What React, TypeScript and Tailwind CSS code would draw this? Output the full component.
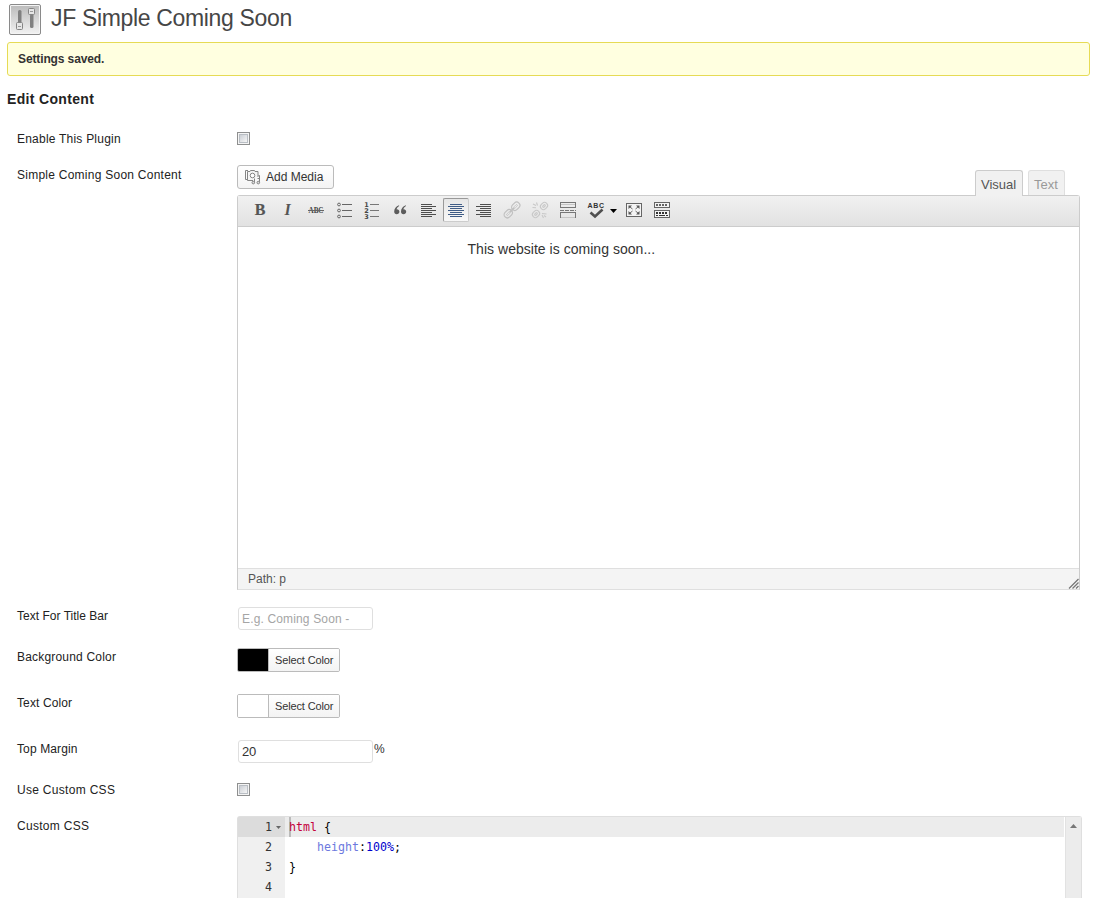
import React from "react";

const SANS = "font-['Liberation_Sans',Arial,sans-serif]";

function Row({
  label,
  height,
  tracking = "tracking-[0.25px]",
  children,
}: {
  label: string;
  height: string;
  tracking?: string;
  children: React.ReactNode;
}) {
  return (
    <div className={`flex ${height}`}>
      <div className={`w-[220px] shrink-0 pt-[10px] text-xs leading-4 text-[#222] ${tracking}`}>{label}</div>
      {children}
    </div>
  );
}

function Checkbox() {
  return (
    <div className="mt-[11px] size-[13px] border border-[#8e8f8f] bg-[#f4f4f4] p-px">
      <div className="size-full border border-[#b9bec4] bg-linear-to-br from-[#cbcfd5] to-[#f6f6f6]" />
    </div>
  );
}

function ColorButton({ swatch }: { swatch: string }) {
  return (
    <button className="mt-[9px] flex h-6 w-[103px] overflow-hidden rounded-[2px] border border-[#bbb]">
      <span className={`h-full w-[31px] border-r border-[#bbb] ${swatch}`} />
      <span className="h-full flex-1 bg-linear-to-b from-white to-[#f3f3f3] pl-[6px] text-left text-[11px] leading-[22px] tracking-[-0.14px] whitespace-nowrap text-[#333]">
        Select Color
      </span>
    </button>
  );
}

function Tool({ children, active, wide }: { children: React.ReactNode; active?: boolean; wide?: boolean }) {
  return (
    <div className={`flex h-[30px] justify-center ${wide ? "w-[38px]" : "w-7"}`}>
      <div
        className={`mt-[2px] flex h-6 items-center justify-center border ${wide ? "w-[38px]" : "w-[26px]"} ${
          active
            ? "rounded-[2px] border-[#999] border-r-[#ccc] border-b-[#ccc] bg-linear-to-b from-[#e6e6e6] to-[#f8f8f8]"
            : "border-transparent"
        }`}
      >
        <svg className={`h-5 shrink-0 ${wide ? "w-[38px]" : "w-5"}`} viewBox={wide ? "0 0 38 20" : "0 0 20 20"} fill="none">
          {children}
        </svg>
      </div>
    </div>
  );
}

function AlignLines({ align, color }: { align: "left" | "center" | "right"; color: string }) {
  const long = { left: 3, center: 2, right: 2 }[align];
  const short = { left: 3, center: 4, right: 6 }[align];
  return (
    <g fill={color} shapeRendering="crispEdges">
      {[0, 1, 2, 3, 4, 5, 6].map((i) => (
        <rect
          key={i}
          x={i % 2 ? long : short}
          y={4 + i * 2}
          width={i % 2 ? (align === "center" ? 16 : 15) : align === "center" ? 12 : 11}
          height="1"
        />
      ))}
    </g>
  );
}

function Toolbar() {
  return (
    <div className="flex h-[31px] border-b border-[#ccc] bg-linear-to-b from-[#f1f1f1] to-[#e2e2e2] pl-2">
      <Tool>
        <text x="10" y="15" textAnchor="middle" fontFamily="Liberation Serif, serif" fontWeight="bold" fontSize="16" fill="#555" stroke="#555" strokeWidth=".2">B</text>
      </Tool>
      <Tool>
        <text x="9.5" y="15" textAnchor="middle" fontFamily="Liberation Serif, serif" fontWeight="bold" fontStyle="italic" fontSize="16" fill="#555">I</text>
      </Tool>
      <Tool>
        <text x="10" y="13" textAnchor="middle" fontFamily="Liberation Serif, serif" fontWeight="bold" fontSize="8" textLength="15" lengthAdjust="spacingAndGlyphs" fill="#444">ABC</text>
        <path d="M2 10.5h16" stroke="#666" />
      </Tool>
      <Tool>
        {[4.5, 10.5, 16.5].map((y) => (
          <g key={y} stroke="#666">
            <circle cx="5" cy={y} r="1.4" />
            <path d={`M8 ${y}h10`} />
          </g>
        ))}
      </Tool>
      <Tool>
        {[4.5, 10.5, 16.5].map((y, i) => (
          <g key={y}>
            <text x="2.2" y={y + 2.2} fontFamily="DejaVu Sans, sans-serif" fontWeight="bold" fontSize="6.5" fill="#444">{i + 1}</text>
            <path d={`M8 ${y}h9`} stroke="#777" />
          </g>
        ))}
      </Tool>
      <Tool>
        <path d="M9 5.2C6 6.2 4.200 8.600 4.200 11.400 4.200 13.100 5.200 14.200 6.700 14.200S9.400 13.200 9.400 11.700 8.300 9.300 6.900 9.300L6.500 9.400C6.800 8 7.700 6.700 9.200 6ZM15.800 5.200C12.800 6.200 11 8.600 11 11.400 11 13.100 12 14.200 13.500 14.200S16.200 13.200 16.200 11.700 15.100 9.300 13.700 9.300L13.300 9.400C13.600 8 14.500 6.700 16 6Z" fill="#5c5c5c" />
      </Tool>
      <Tool>
        <AlignLines align="left" color="#4d4d4d" />
      </Tool>
      <Tool active>
        <AlignLines align="center" color="#3f5c86" />
      </Tool>
      <Tool>
        <AlignLines align="right" color="#4d4d4d" />
      </Tool>
      <Tool>
        <g transform="rotate(-45 10 10)" stroke="#c0c0c0" strokeWidth="1.200">
          <rect x=".2" y="6.800" width="9" height="6.400" rx="3.200" />
          <rect x="10.800" y="6.800" width="9" height="6.400" rx="3.200" />
          <rect x="2.700" y="9.200" width="4.200" height="1.600" rx=".8" strokeWidth=".7" />
          <rect x="13.100" y="9.200" width="4.200" height="1.600" rx=".8" strokeWidth=".7" />
          <path d="M7 10h6" strokeWidth="1.800" />
        </g>
      </Tool>
      <Tool>
        <g stroke="#c8c8c8" strokeWidth="1.100">
          <rect x="-3.800" y="-3" width="7.600" height="6" rx="3" transform="translate(14 6) rotate(-45)" />
          <rect x="-3.800" y="-3" width="7.600" height="6" rx="3" transform="translate(6 14) rotate(-45)" />
          <rect x="-1.500" y="-.8" width="3" height="1.600" rx=".8" transform="translate(14 6) rotate(-45)" />
          <rect x="-1.500" y="-.8" width="3" height="1.600" rx=".8" transform="translate(6 14) rotate(-45)" />
          <path d="m3 4 3 1.500M6.500 2.500l1 3M2.500 7.500l3.500.300M12 13.500l4.500.500M12 15l1.500 3M14 15.500l2 1.500" />
        </g>
      </Tool>
      <Tool>
        <g shapeRendering="crispEdges">
          <path d="M2.500 2v5.500h15V2M2 2.500h16M2.500 18v-5.500h15V18" stroke="#777" />
          <path d="M3 4.500h14M3 17.500h14" stroke="#c5c5c5" />
          <path d="M2 10.500h16" stroke="#777" strokeDasharray="4 1" />
        </g>
      </Tool>
      <Tool wide>
        <text x="5.500" y="8" fontFamily="Liberation Sans, sans-serif" fontWeight="bold" fontSize="7" textLength="16.500" fill="#333">ABC</text>
        <path d="m8.500 12.500 4.500 4 7.500-7" stroke="#505050" strokeWidth="2.600" />
        <path d="M28 9h7l-3.500 4Z" fill="#000" />
      </Tool>
      <Tool>
        <rect x="2.500" y="3.500" width="15" height="13" fill="#f4f4f4" stroke="#666" shapeRendering="crispEdges" />
        <path d="M4.500 5.500h3.500l-3.500 3.500ZM15.500 5.500v3.500l-3.500-3.500ZM4.500 14.500v-3.500l3.500 3.500ZM15.500 14.500h-3.500l3.500-3.500Z" fill="#555" />
        <path d="m6 7 2.500 2M14 7l-2.500 2M6 13l2.500-2M14 13l-2.500-2" stroke="#666" />
      </Tool>
      <Tool>
        <g shapeRendering="crispEdges" stroke="#666">
          <path d="M2.500 2.500h15v5h-15zM2.500 10.500h15v7h-15z" fill="#f4f4f4" />
          <path d="M4 5h12" strokeWidth="2" strokeDasharray="2 1" />
          <path d="M4 13h12" stroke="#333" strokeWidth="2" strokeDasharray="2 1" />
          <path d="M4 15.500h2m1 0h6m1 0h2" stroke="#333" />
        </g>
      </Tool>
    </div>
  );
}

function Editor() {
  return (
    <div className="w-[843px] pt-2">
      <div className="flex h-[30px] justify-between">
        <button className="flex h-6 w-[97px] items-center rounded-[3px] border border-[#bbb] bg-linear-to-b from-white to-[#f4f4f4] pl-[7px] text-xs whitespace-nowrap text-[#333]">
          <svg className="mr-[5px] size-4 shrink-0" viewBox="0 0 16 16" fill="none" stroke="#848484">
            <path d="M3 1.500H.5v9H3" />
            <path d="M8 11.500H2.500v-9H5l.5-1h4l.5 1h3V7" fill="#f4f4f4" />
            <circle cx="7.500" cy="6.500" r="2.300" fill="#fff" />
            <path d="M9.500 13.500v-4M14.500 13.500V6.500l-2 1M12.500 9.500h2" />
            <circle cx="8.300" cy="13.600" r="1.300" fill="#ddd" />
            <circle cx="13.300" cy="13.600" r="1.300" fill="#ddd" />
          </svg>
          Add Media
        </button>
        <div className="mr-[15px] flex gap-[5px] pt-[5px] text-[13px]">
          <div className="relative h-[26px] w-12 rounded-t-[3px] border border-b-0 border-[#ccc] bg-[#f1f1f1] pl-[5px] leading-[27px] text-[#555]">
            Visual
          </div>
          <div className="h-[25px] w-[37px] rounded-t-[3px] border border-b-0 border-[#dfdfdf] bg-[#f1f1f1] pl-[5px] leading-[27px] text-[#999]">Text</div>
        </div>
      </div>
      <div className="h-[395px] rounded-t-[3px] border border-[#ccc] border-b-[#dfdfdf] bg-white">
        <Toolbar />
        <div className="h-[341px] pt-[13px] pl-[229.5px] text-sm leading-[19px] tracking-[0.03px] text-[#333]">This website is coming soon...</div>
        <div className="flex h-[21px] items-end justify-between border-t border-[#dfdfdf] bg-[#f4f4f4] pl-[10px] text-xs leading-5 text-[#555]">
          <span>Path: p</span>
          <svg className="h-[11px] w-[11px]" viewBox="0 0 11 11" stroke="#777" strokeWidth="1.300">
            <path d="M1 10.500 10.500 1M4.500 10.500l6-6M8 10.500l2.500-2.500" />
          </svg>
        </div>
      </div>
    </div>
  );
}

function CodeEditor() {
  return (
    <div className="mt-2 flex h-[82px] w-[845px] rounded-t-[3px] border border-b-0 border-[#dfdfdf] font-['DejaVu_Sans_Mono',monospace] text-[11.63px] leading-5">
      <div className="w-[47px] bg-[#f0f0f0] text-[#333]">
        <div className="flex h-5 items-center bg-[#dcdcdc] pl-[27px]">
          1
          <svg className="ml-1 h-[3px] w-[5px]" viewBox="0 0 5 3">
            <path d="M0 0h5L2.500 3Z" fill="#666" />
          </svg>
        </div>
        <div className="pl-[27px]">2</div>
        <div className="pl-[27px]">3</div>
        <div className="pl-[27px]">4</div>
      </div>
      <div className="flex-1 whitespace-pre text-black">
        <div className="h-5 bg-[#ececec] pl-1">
          <span className="-mr-[2px] inline-block h-5 border-l-2 border-[#bbb] align-top" />
          <span className="text-[#c5003c]">html</span>
          {" {"}
        </div>
        <div className="pl-1">
          {"    "}
          <span className="text-[#6d79de]">height</span>:<span className="text-[#0000cd]">100%</span>;
        </div>
        <div className="pl-1">{"}"}</div>
      </div>
      <div className="ml-px flex w-4 justify-center border-l border-[#e2e2e2] bg-[#ececec] pt-[7px]">
        <svg className="h-1 w-[7px]" viewBox="0 0 7 4">
          <path d="M0 4h7L3.500 0Z" fill="#777" />
        </svg>
      </div>
    </div>
  );
}

export default function App() {
  return (
    <div className={`h-[898px] w-[1099px] overflow-hidden bg-white pl-[7px] ${SANS}`}>
      <div className="flex h-[42px] pl-[2px]">
        <svg className="mt-[3px] size-8 shrink-0" viewBox="0 0 32 32" fill="none">
          <defs>
            <linearGradient id="tile" x1="0" y1="0" x2="0" y2="1">
              <stop stopColor="#bdbdbd" />
              <stop offset="1" stopColor="#f0f0f0" />
            </linearGradient>
          </defs>
          <rect x=".5" y="1.500" width="31" height="30" rx="1.500" fill="#f4f4f4" stroke="#8a8a8a" />
          <rect x="2" y="3" width="28" height="27" fill="url(#tile)" />
          <rect x="9" y="7" width="3.500" height="13" rx="1.500" fill="#808080" />
          <rect x="21" y="11" width="3.500" height="14" rx="1.500" fill="#808080" />
          <rect x="7.500" y="19.500" width="6" height="7" rx="1" fill="#e6e6e6" stroke="#858585" />
          <rect x="19.500" y="5.500" width="6" height="6" rx="1" fill="#e6e6e6" stroke="#858585" />
          <path d="M9 23.500h3M21 8.500h3" stroke="#999" />
        </svg>
        <h2 className="ml-[10px] text-[23px] leading-9 tracking-[-0.34px] text-[#464646]">JF Simple Coming Soon</h2>
      </div>
      <div className="h-[34px] w-[1083px] rounded-[3px] border border-[#e6db55] bg-[#ffffe0] pl-[10px] text-xs leading-[32px] font-bold tracking-[-0.12px] text-[#333]">
        Settings saved.
      </div>
      <h3 className="h-[45px] pt-[13px] text-sm leading-5 font-bold tracking-[0.33px] text-[#222]">Edit Content</h3>
      <div className="pl-[10px]">
        <Row label="Enable This Plugin" height="h-9" tracking="tracking-[0.22px]">
          <Checkbox />
        </Row>
        <Row label="Simple Coming Soon Content" height="h-[441px]">
          <Editor />
        </Row>
        <Row label="Text For Title Bar" height="h-[41px]" tracking="tracking-[0.02px]">
          <input
            className="mt-[9px] ml-px h-[23px] w-[135px] rounded-[3px] border border-[#dfdfdf] px-[3px] text-xs tracking-[0.15px] placeholder:text-[#a5a5a5]"
            placeholder="E.g. Coming Soon - "
          />
        </Row>
        <Row label="Background Color" height="h-[46px]" tracking="tracking-[0.19px]">
          <ColorButton swatch="bg-black" />
        </Row>
        <Row label="Text Color" height="h-[46px]" tracking="tracking-[0.12px]">
          <ColorButton swatch="bg-white" />
        </Row>
        <Row label="Top Margin" height="h-[41px]" tracking="tracking-[0.12px]">
          <input
            className="mt-[9px] ml-px h-[23px] w-[135px] rounded-[3px] border border-[#dfdfdf] px-[3px] text-[13px] tracking-[-0.2px] text-[#333]"
            defaultValue="20"
          />
          <span className="ml-px pt-[10px] text-xs leading-4 text-[#333]">%</span>
        </Row>
        <Row label="Use Custom CSS" height="h-9" tracking="tracking-[0.3px]">
          <Checkbox />
        </Row>
        <Row label="Custom CSS" height="h-[90px]" tracking="tracking-[0.3px]">
          <CodeEditor />
        </Row>
      </div>
    </div>
  );
}
